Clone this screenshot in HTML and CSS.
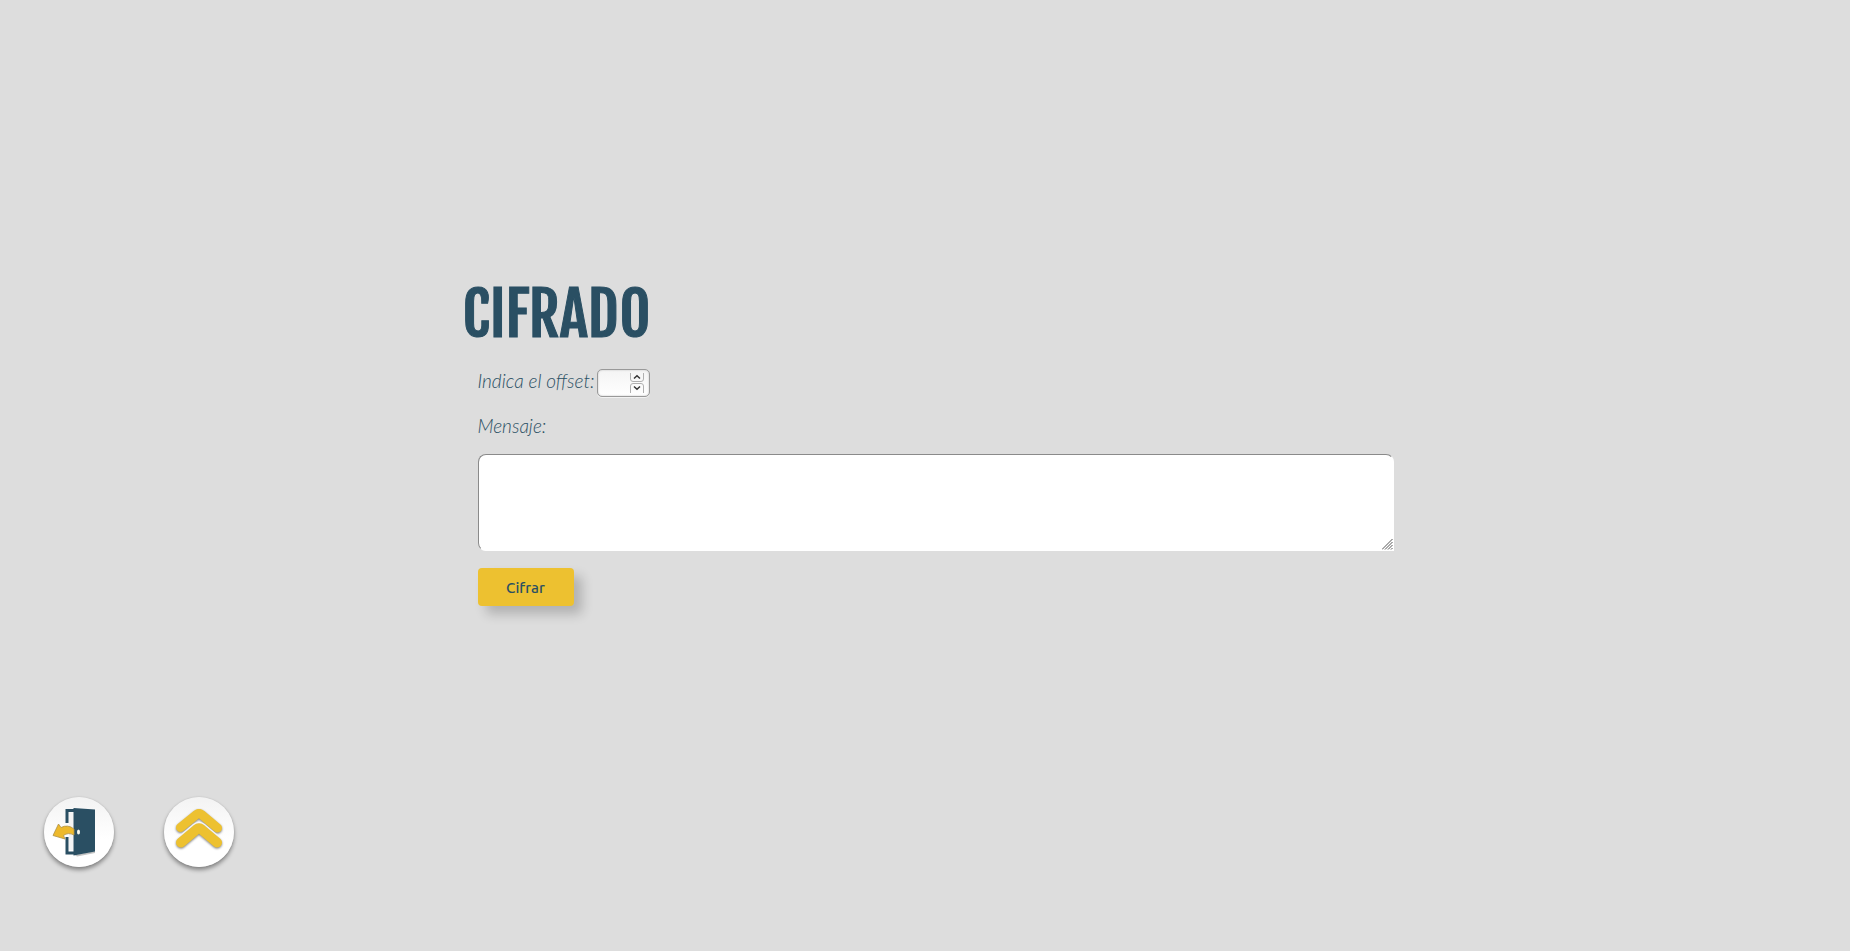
FILE: index.html
```html
<!DOCTYPE html>
<html lang="es">
<head>
<meta charset="utf-8">
<title>Cifrado</title>
<link rel="stylesheet" href="styles.css">
</head>
<body>
<main class="cipher">
  <h1 class="title">CIFRADO</h1>
  <form class="form">
    <div class="row">
      <label class="label" for="offset">Indica el offset:</label>
      <span class="stepper">
        <input class="offset" id="offset" type="number">
        <svg class="spin" width="14" height="22" viewBox="0 0 14 22" fill="none" aria-hidden="true">
          <path d="M.5 1V7Q.5 9.500 3 9.500H11Q13.500 9.500 13.500 7V1M.5 21V14Q.5 11.500 3 11.500H11Q13.500 11.500 13.500 14V21" stroke="#b0b0b0"/>
          <path d="M4 6.500L7 3.800L10 6.500M4 14.500L7 17.200L10 14.500" stroke="#333" stroke-width="1.500"/>
        </svg>
      </span>
    </div>
    <label class="label" for="message">Mensaje:</label>
    <div class="field">
      <textarea class="message" id="message"></textarea>
      <svg class="grip" width="11" height="11" viewBox="0 0 11 11" aria-hidden="true">
        <path d="M0 10.500L10.500 0M3 10.500L10.500 3M6 10.500L10.500 6M9 10.500L10.500 9" stroke="#555"/>
      </svg>
    </div>
    <button class="submit" type="button">Cifrar</button>
  </form>
</main>
<nav class="nav">
  <a class="round" href="#salir" aria-label="Salir">
    <svg width="70" height="70" viewBox="0 0 70 70">
      <path d="M31 58L51 54V56L33 59.500Z" fill="#999" opacity=".6"/>
      <path d="M31 13.500H23V26M23 40V56H31" fill="none" stroke="#2a4f63" stroke-width="3"/>
      <path d="M25 16H29.500V53H25Z" fill="#f4f4f4"/>
      <path d="M29.500 11L51 12.500V54.500L29.500 58.500Z" fill="#2a4f63"/>
      <path d="M9 38.500L14.500 27L17 30.500Q24 27 30 32V38Q24 35 19.500 38.500L21 42Z" fill="#edb92c" stroke="#ad9048" stroke-width=".8"/>
      <ellipse cx="34.500" cy="35" rx="1.500" ry="2.500" fill="#f8f8ee"/>
    </svg>
  </a>
  <a class="round" href="#inicio" aria-label="Subir">
    <svg width="70" height="70" viewBox="0 0 70 70" fill="none" stroke-linecap="round" stroke-linejoin="round">
      <g class="chevron">
        <path d="M16.500 30.500L32.500 17.500Q35 15.500 37.500 17.500L53.500 31" stroke="#edc130" stroke-width="9"/>
      </g>
      <path d="M17 45L32.500 32Q35 30 37.500 32L53 45" stroke="#fff" stroke-width="12"/>
      <g class="chevron">
        <path d="M17 45.500L32.500 32.500Q35 30.500 37.500 32.500L53 45.500" stroke="#edc130" stroke-width="10"/>
      </g>
    </svg>
  </a>
</nav>
</body>
</html>
```
FILE: styles.css
```css
* { box-sizing: border-box; }
body {
  margin: 0;
  min-height: 100vh;
  display: flex;
  flex-direction: column;
  justify-content: space-between;
  background: #ddd;
  color: #2a4f63;
  font-family: Lato, sans-serif;
}
.cipher {
  width: 50%;
  margin: 0 auto;
  padding-top: 274px;
}
.title {
  margin: 0;
  font: 400 60px/80px "Fjalla One", "Roboto Condensed", "Open Sans Condensed", "Liberation Sans Narrow", sans-serif;
  -webkit-text-stroke: 1px #2a4f63;
}
.form { padding-left: 15px; margin-right: -6px; }
.row {
  display: flex;
  gap: 3px;
  margin: 15px 0 16px;
}
.label {
  display: block;
  font-size: 19px;
  font-style: italic;
  font-weight: 300;
  line-height: 24px;
}
.stepper { position: relative; display: block; height: 29px; }
.offset {
  display: block;
  width: 53px;
  height: 28px;
  padding: 0 18px 0 4px;
  border: 1px solid #999;
  border-radius: 5px;
  background: linear-gradient(#f4f4f4, #fff);
  box-shadow: 0 1px 0 #f2f2f2, inset 0 0 2px #bbb;
  appearance: textfield;
}
.spin { position: absolute; right: 6px; top: 3px; pointer-events: none; }
.field { position: relative; margin-top: 16px; }
.message {
  display: block;
  width: 100%;
  height: 97px;
  padding: 4px;
  border: 1px solid #fff;
  border-top-color: #8a8a8a;
  border-left-color: #8a8a8a;
  border-radius: 8px 8px 0 8px;
  background: #fff;
  resize: none;
}
.grip { position: absolute; right: 1px; bottom: 1px; pointer-events: none; }
.submit {
  width: 96px;
  height: 38px;
  margin-top: 17px;
  padding: 0;
  border: 0;
  border-radius: 4px;
  background: #edc130;
  color: #2a4f63;
  box-shadow: 8px 8px 12px rgba(0, 0, 0, .2);
  font: 500 15px Ubuntu, "Noto Sans", sans-serif;
}
.nav { display: flex; gap: 50px; padding: 0 44px 84px; }
.round {
  width: 70px;
  height: 70px;
  border-radius: 50%;
  background: linear-gradient(#f3f3f3, #fff 60%);
  box-shadow: 0 3px 4px rgba(0, 0, 0, .4), 0 0 2px rgba(0, 0, 0, .1);
}
.round svg { display: block; }
.chevron { filter: drop-shadow(0 1px 1px rgba(0, 0, 0, .5)); }
```
